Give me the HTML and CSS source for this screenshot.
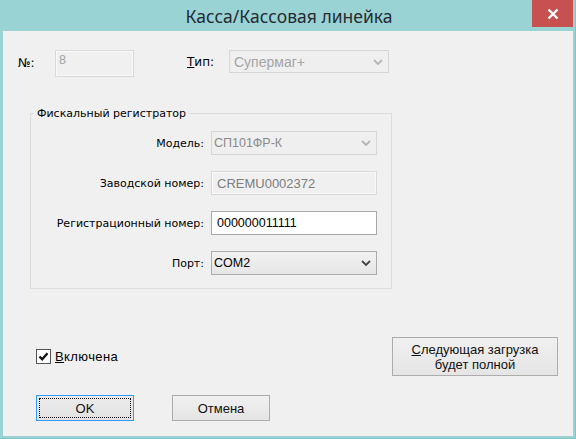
FILE: index.html
```html
<!DOCTYPE html>
<html lang="ru">
<head>
<meta charset="utf-8">
<title>Касса/Кассовая линейка</title>
<link rel="stylesheet" href="styles.css">
</head>
<body>
<div class="window">
  <div class="titlebar">
    <span class="title-spacer"></span>
    <div class="title">Касса/Кассовая линейка</div>
    <button class="close" type="button" aria-label="Закрыть">
      <svg width="12" height="12" viewBox="0 0 12 12"><path d="M1.5 1.5 L10.5 10.5 M10.5 1.5 L1.5 10.5" stroke="#fff" stroke-width="2.4" fill="none"/></svg>
    </button>
  </div>

  <div class="client">
    <div class="top-row">
      <span class="label lbl-num">№:</span>
      <div class="edit edit-disabled edit-num">8</div>
      <span class="label lbl-type"><u>Т</u>ип:</span>
      <div class="combo combo-disabled combo-type">
        <span class="combo-text">Супермаг+</span>
        <svg class="chev" width="10" height="6" viewBox="0 0 10 6"><path d="M1 1 L5 5 L9 1" stroke="currentColor" stroke-width="1.8" fill="none"/></svg>
      </div>
    </div>

    <fieldset class="group">
      <legend>Фискальный регистратор</legend>
      <div class="form">
        <span class="label">Модель:</span>
        <div class="combo combo-disabled">
          <span class="combo-text">СП101ФР-К</span>
          <svg class="chev" width="10" height="6" viewBox="0 0 10 6"><path d="M1 1 L5 5 L9 1" stroke="currentColor" stroke-width="1.8" fill="none"/></svg>
        </div>

        <span class="label">Заводской номер:</span>
        <div class="edit edit-disabled edit-serial">CREMU0002372</div>

        <span class="label">Регистрационный номер:</span>
        <div class="edit edit-active">000000011111</div>

        <span class="label">Порт:</span>
        <div class="combo combo-active">
          <span class="combo-text">COM2</span>
          <svg class="chev" width="10" height="6" viewBox="0 0 10 6"><path d="M1 1 L5 5 L9 1" stroke="currentColor" stroke-width="1.8" fill="none"/></svg>
        </div>
      </div>
    </fieldset>

    <div class="bottom">
      <div class="row-a">
        <label class="check">
          <span class="check-box">
            <svg width="11" height="11" viewBox="0 0 11 11"><path d="M1.5 5.5 L4.2 8.3 L9.5 2.2" stroke="#111" stroke-width="2.3" fill="none"/></svg>
          </span>
          <span class="check-text"><u>В</u>ключена</span>
        </label>
        <button class="btn btn-wide" type="button"><u>С</u>ледующая загрузка<br>будет полной</button>
      </div>
      <div class="row-b">
        <button class="btn btn-default" type="button"><span class="focus-ring">OK</span></button>
        <button class="btn" type="button">Отмена</button>
      </div>
    </div>
  </div>
</div>
</body>
</html>
```

FILE: styles.css
```css
html, body {
  margin: 0;
  padding: 0;
  background: #99d3d3;
}

.window {
  width: 576px;
  height: 439px;
  box-sizing: border-box;
  background: #99d3d3;
  border-right: 1px solid #84c4c5;
  border-bottom: 1px solid #84c4c5;
  padding: 0 2px 2px 3px;
  display: flex;
  flex-direction: column;
}

/* caption bar */
.titlebar {
  height: 31px;
  flex: none;
  display: grid;
  grid-template-columns: 1fr auto 1fr;
  align-items: start;
}

.title {
  font-family: "Noto Sans", "Open Sans", sans-serif;
  font-size: 17.5px;
  line-height: 33px;
  color: #262a33;
  padding-left: 2px;
  white-space: nowrap;
}

.close {
  justify-self: end;
  width: 41px;
  height: 27px;
  margin: 0;
  padding: 0;
  border: none;
  background: #c75050;
  display: flex;
  align-items: center;
  justify-content: center;
}

/* dialog area */
.client {
  flex: 1;
  background: #f0f0f0;
  display: flex;
  flex-direction: column;
  font-family: "DejaVu Sans", sans-serif;
  font-size: 11px;
  color: #000;
}

.label {
  white-space: nowrap;
}

.top-row {
  display: flex;
  align-items: flex-start;
  margin-top: 19px;
  padding-left: 15px;
}

.lbl-num {
  width: 37px;
  padding-top: 6px;
  font-size: 12px;
}

.lbl-type {
  margin-left: 53px;
  width: 42px;
  padding-top: 5px;
  font-size: 12px;
}

/* edit boxes */
.edit {
  box-sizing: border-box;
  height: 24px;
  border: 1px solid #d9d9d9;
  padding: 4px 5px 0;
  font-family: "Liberation Sans", sans-serif;
  font-size: 12.5px;
  line-height: 15px;
  white-space: nowrap;
}

.edit-disabled {
  background: #f0f0f0;
  color: #8c8c8c;
  box-shadow: inset 0 0 0 1px #fafafa;
}

.edit-num {
  width: 79px;
  height: 27px;
  padding: 2px 3px 0;
  color: #a3a3a3;
}

.edit-serial {
  color: #7d7d7d;
  font-size: 13px;
}

.edit-active {
  background: #fff;
  border-color: #a9a9a9;
  color: #000;
}

/* drop-down lists */
.combo {
  box-sizing: border-box;
  height: 24px;
  display: flex;
  align-items: center;
  justify-content: space-between;
  padding: 0 5px 0 2px;
  font-family: "Liberation Sans", sans-serif;
  font-size: 12.5px;
  white-space: nowrap;
}

.combo-disabled {
  border: 1px solid #d6d6d6;
  background: #efefef;
  color: #8a8a8a;
}

.combo-type {
  width: 160px;
  height: 23px;
  padding-left: 4px;
  color: #a5a5a5;
  font-size: 14px;
}

.combo-active {
  border: 1px solid #acacac;
  background: linear-gradient(#f2f2f2, #e6e6e6);
  color: #000;
}

.combo-disabled .chev {
  color: #b5b5b5;
}

.combo-active .chev {
  color: #444;
}

/* group box */
.group {
  width: 362px;
  box-sizing: border-box;
  margin: 29px 0 0 27px;
  padding: 10px 14px 13px 0;
  border: 1px solid #dcdcdc;
  min-width: 0;
}

.group legend {
  margin-left: 3px;
  padding: 0 3px;
  font-family: "DejaVu Sans", sans-serif;
  font-size: 11px;
  line-height: 15px;
  color: #000;
}

.form {
  display: grid;
  grid-template-columns: 1fr 166px;
  grid-auto-rows: 24px;
  column-gap: 7px;
  row-gap: 16px;
  align-items: center;
  justify-items: end;
}

.form > .edit,
.form > .combo {
  justify-self: stretch;
}

/* bottom controls */
.bottom {
  margin-top: auto;
  padding: 0 15px 15px 33px;
  font-family: "Liberation Sans", sans-serif;
  font-size: 13px;
}

.row-a {
  height: 39px;
  display: flex;
  align-items: center;
  justify-content: space-between;
}

.check {
  display: flex;
  align-items: center;
  gap: 4px;
}

.check-text {
  letter-spacing: 0.4px;
}

.check-box {
  box-sizing: border-box;
  width: 15px;
  height: 15px;
  border: 1px solid #555;
  background: #fff;
  display: flex;
  align-items: center;
  justify-content: center;
}

.row-b {
  margin-top: 19px;
  display: flex;
  gap: 38px;
}

.btn {
  box-sizing: border-box;
  width: 98px;
  height: 26px;
  margin: 0;
  padding: 0;
  border: 1px solid #acacac;
  background: linear-gradient(#f0f0f0, #e5e5e5);
  font-family: "Liberation Sans", sans-serif;
  font-size: 13px;
  color: #111;
  line-height: 15px;
}

.btn-wide {
  width: 166px;
  height: 39px;
}

.btn-default {
  border-color: #3399ff;
  padding: 2px;
  background: linear-gradient(#ececec, #e2e2e2);
}

.focus-ring {
  display: flex;
  align-items: center;
  justify-content: center;
  height: 100%;
  box-sizing: border-box;
  border: 1px dotted #000;
}
```
